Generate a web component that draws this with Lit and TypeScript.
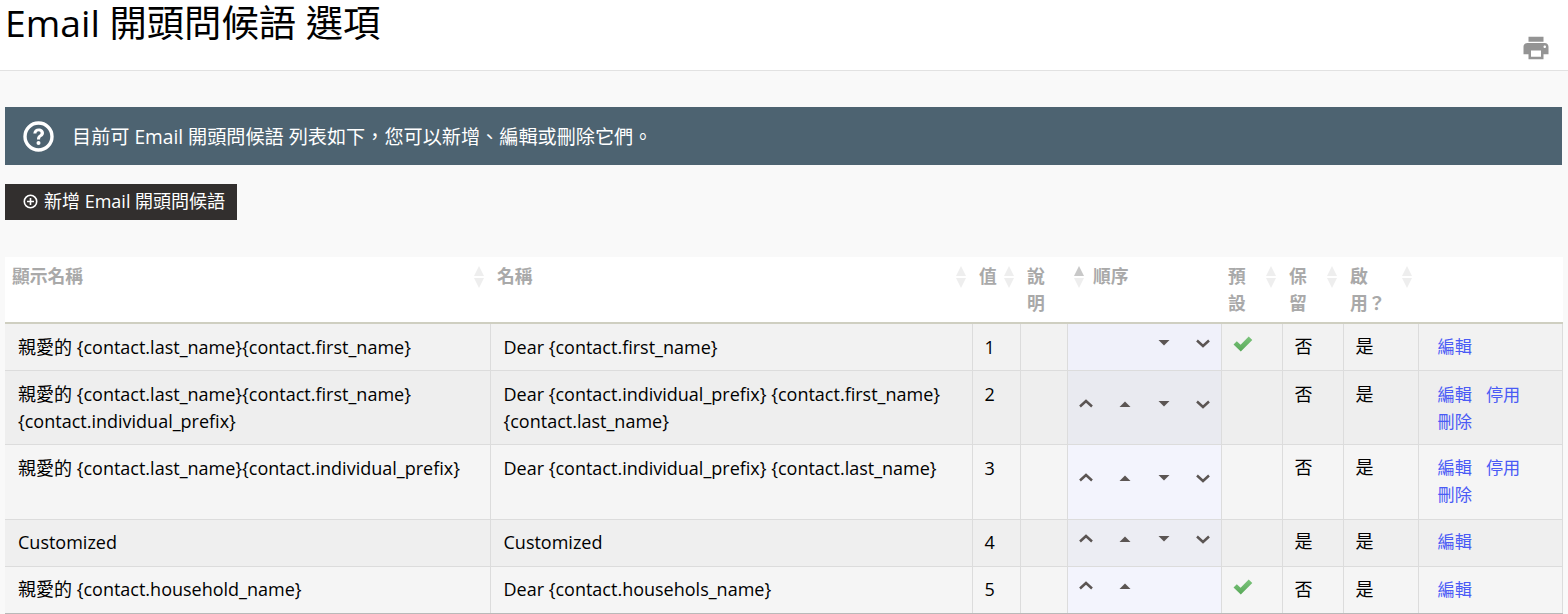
import { LitElement, html, css, svg, nothing } from "lit";
import { customElement } from "lit/decorators.js";

type Row = {
  label: string[];
  name: string[];
  value: string;
  order: [boolean, boolean, boolean, boolean];
  isDefault: boolean;
  reserved: string;
  actions: string[][];
};

const rows: Row[] = [
  { label: ["親愛的 {contact.last_name}{contact.first_name}"], name: ["Dear {contact.first_name}"], value: "1", order: [false, false, true, true], isDefault: true, reserved: "否", actions: [["編輯"]] },
  { label: ["親愛的 {contact.last_name}{contact.first_name}", "{contact.individual_prefix}"], name: ["Dear {contact.individual_prefix} {contact.first_name}", "{contact.last_name}"], value: "2", order: [true, true, true, true], isDefault: false, reserved: "否", actions: [["編輯", "停用"], ["刪除"]] },
  { label: ["親愛的 {contact.last_name}{contact.individual_prefix}"], name: ["Dear {contact.individual_prefix} {contact.last_name}"], value: "3", order: [true, true, true, true], isDefault: false, reserved: "否", actions: [["編輯", "停用"], ["刪除"]] },
  { label: ["Customized"], name: ["Customized"], value: "4", order: [true, true, true, true], isDefault: false, reserved: "是", actions: [["編輯"]] },
  { label: ["親愛的 {contact.household_name}"], name: ["Dear {contact.househols_name}"], value: "5", order: [true, true, false, false], isDefault: true, reserved: "否", actions: [["編輯"]] },
];

const orderIcons = [
  svg`<path d="M1 8.500 7 3l6 5.500" fill="none" stroke="currentColor" stroke-width="2.500"/>`,
  svg`<path d="M1.500 9 7 3.500 12.500 9z" fill="currentColor"/>`,
  svg`<path d="M1.500 3h11L7 8.500z" fill="currentColor"/>`,
  svg`<path d="M1 3.500 7 9l6-5.500" fill="none" stroke="currentColor" stroke-width="2.500"/>`,
];

@customElement("app-root")
export class AppRoot extends LitElement {
  static styles = css`
    :host {
      display: block;
      height: 614px;
      overflow: hidden;
      background: #f9f9f9;
      color: #000;
      font-family: "Open Sans", "Noto Sans CJK TC", sans-serif;
      font-size: 18px;
      line-height: 27px;
    }
    .page-header {
      box-sizing: border-box;
      background: #fff;
      border-bottom: 1px solid #e2e2e2;
      display: flex;
      justify-content: space-between;
      padding: 0 17px 0 5px;
      height: 71px;
    }
    h1 {
      margin: 0;
      font-size: 37.3px;
      font-weight: 400;
      line-height: 46px;
      white-space: pre;
    }
    .print {
      width: 30px;
      height: 30px;
      margin-top: 33px;
      color: #949494;
      fill: currentColor;
    }
    .content {
      padding: 36px 6px 0 5px;
    }
    .info {
      height: 58px;
      background: #4d6371;
      color: #fff;
      display: flex;
      align-items: center;
      gap: 18px;
      padding-left: 18px;
      font-size: 19.15px;
    }
    .info span {
      margin-top: 2px;
    }
    .info svg {
      width: 31px;
      height: 31px;
      flex: none;
    }
    .add {
      display: inline-flex;
      align-items: center;
      gap: 6px;
      height: 36px;
      margin-top: 19px;
      padding: 0 12px 1px 18px;
      box-sizing: border-box;
      background: #322f2e;
      vertical-align: top;
    }
    a.add { color: #fff; }
    .add svg {
      width: 15px;
      height: 15px;
    }
    .actions-row {
      height: 92px;
    }
    table {
      width: 1557px;
      table-layout: fixed;
      border-collapse: collapse;
      background: #fff;
    }
    th {
      height: 66px;
      box-sizing: border-box;
      padding: 6px 6px 0 7px;
      text-align: left;
      vertical-align: top;
      font-size: 17.8px;
      font-weight: 700;
      color: #a9a9a9;
      border-bottom: 2px solid #cfcfc1;
    }
    .th {
      display: flex;
      justify-content: space-between;
      gap: 4px;
    }
    .th.lead {
      justify-content: flex-start;
      gap: 9px;
    }
    .sort {
      flex: none;
      width: 10px;
      height: 22px;
      margin-top: 3px;
    }
    .sort path { fill: #eeeeee; }
    .sort path.on { fill: #c8c8c8; }
    td {
      box-sizing: border-box;
      padding: 10px 7px 9px 13px;
      vertical-align: top;
      border: 1px solid #dcdcdc;
      white-space: nowrap;
    }
    td:first-child { border-left: 0; }
    tr:last-child td { border-bottom-color: #b9b9b9; }
    tr.s0 td { background: #f2f2f2; }
    tr.s0 td.o { background: #f0f1fa; }
    tr.s1 td { background: #eeeeee; }
    tr.s1 td.o { background: #e9eaf0; }
    tr.s2 td, tr.s4 td { background: #f5f5f5; }
    tr.s2 td.o, tr.s4 td.o { background: #f3f4fd; }
    tr.s3 td { background: #efefef; }
    tr.s3 td.o { background: #ecedf3; }
    tr.s3 td, tr.s4 td {
      padding-top: 9px;
      padding-bottom: 10px;
    }
    td.c { padding-left: 12px; }
    td.o, tr.s3 td.o, tr.s4 td.o {
      padding: 0 0 8px 11px;
      vertical-align: middle;
    }
    .order {
      display: flex;
      gap: 25px;
      color: #5b5553;
    }
    .order svg {
      width: 14px;
      height: 12px;
      flex: none;
    }
    td.d, tr.s3 td.d, tr.s4 td.d { padding: 0 0 0 11px; }
    .check {
      display: block;
      width: 20px;
      height: 18px;
      margin-top: 11px;
    }
    td.a {
      padding-left: 19px;
      font-size: 17.2px;
    }
    td.cjk { padding-top: 9px; padding-bottom: 10px; }
    tr.s1 td.cjk { padding-top: 10px; padding-bottom: 9px; }
    tr.s2 td.cjk { padding-bottom: 11px; }
    tr.s3 td.cjk { padding-top: 8px; }
    .links {
      display: flex;
      gap: 14px;
    }
    a {
      color: #4a5bf5;
      text-decoration: none;
    }
  `;

  private sort(active = false) {
    return html`<svg class="sort" viewBox="0 0 10 22" aria-hidden="true">
      <path class=${active ? "on" : ""} d="M5 0l5 10H0z" />
      <path d="M0 12h10L5 22z" />
    </svg>`;
  }

  private header(label: unknown, leading = false) {
    return leading
      ? html`<th><div class="th lead">${this.sort(true)}<span>${label}</span></div></th>`
      : html`<th><div class="th"><span>${label}</span>${this.sort()}</div></th>`;
  }

  private lines(list: string[]) {
    return list.map((l, i) => html`${i ? html`<br />` : nothing}${l}`);
  }

  render() {
    return html`
      <header class="page-header">
        <h1>Email 開頭問候語 選項</h1>
        <svg class="print" viewBox="0 0 24 24" aria-label="列印">
          <path d="M19 8H5c-1.660 0-3 1.340-3 3v6h4v4h12v-4h4v-6c0-1.660-1.340-3-3-3zm-3 11H8v-5h8v5zm3-7c-.55 0-1-.45-1-1s.45-1 1-1 1 .45 1 1-.45 1-1 1zm-1-9H6v4h12V3z" />
        </svg>
      </header>
      <main class="content">
        <div class="info">
          <svg viewBox="0 0 31 31" aria-hidden="true">
            <circle cx="15.500" cy="15.500" r="13.500" fill="none" stroke="#fff" stroke-width="3.400" />
            <path d="M10.300 12.500c.2-3.200 2.400-5.100 5.400-5.100 3.100 0 5.300 1.900 5.300 4.500 0 1.900-1.100 3-2.400 3.900-1.200.8-1.500 1.300-1.500 2.600h-3.100c0-2.200.7-3.300 2.100-4.300 1-.7 1.500-1.200 1.500-2.100 0-1-.8-1.700-1.900-1.700-1.300 0-2.100.8-2.300 2.200z" fill="#fff" />
            <circle cx="15.500" cy="22" r="2" fill="#fff" />
          </svg>
          <span>目前可 Email 開頭問候語 列表如下，您可以新增、編輯或刪除它們。</span>
        </div>
        <div class="actions-row">
          <a class="add" href="#">
            <svg viewBox="0 0 15 15" aria-hidden="true">
              <circle cx="7.500" cy="7.500" r="6.200" fill="none" stroke="#fff" stroke-width="1.600" />
              <path d="M7.500 4v7M4 7.500h7" stroke="#fff" stroke-width="1.600" />
            </svg>
            <span>新增 Email 開頭問候語</span>
          </a>
        </div>
        <table>
          <colgroup>
            <col style="width:485px" /><col style="width:482px" /><col style="width:48px" />
            <col style="width:47px" /><col style="width:154px" /><col style="width:61px" />
            <col style="width:61px" /><col style="width:75px" /><col style="width:144px" />
          </colgroup>
          <thead>
            <tr>
              ${this.header("顯示名稱")}
              ${this.header("名稱")}
              ${this.header("值")}
              <th><span>說<br />明</span></th>
              ${this.header("順序", true)}
              ${this.header(html`預<br />設`)}
              ${this.header(html`保<br />留`)}
              ${this.header(html`啟<br />用？`)}
              <th></th>
            </tr>
          </thead>
          <tbody>
            ${rows.map(
              (r, i) => html`<tr class="s${i}">
                <td>${this.lines(r.label)}</td>
                <td>${this.lines(r.name)}</td>
                <td class="c">${r.value}</td>
                <td></td>
                <td class="o">
                  <div class="order">
                    ${r.order.map(
                      (on, k) => html`<svg viewBox="0 0 14 12" aria-hidden="true">${on ? orderIcons[k] : nothing}</svg>`
                    )}
                  </div>
                </td>
                <td class="d">
                  ${r.isDefault
                    ? html`<svg class="check" viewBox="0 0 20 18" aria-label="預設">
                        <defs>
                          <linearGradient id="chk${i}" x1="0" y1="0" x2="0" y2="1">
                            <stop offset="0" stop-color="#7cc47c" />
                            <stop offset="1" stop-color="#58a858" />
                          </linearGradient>
                        </defs>
                        <path fill="url(#chk${i})" d="M.5 9.500 3.800 6.300 7.600 9.800 15.700 1.500 19.300 5 7.800 16.500z" />
                      </svg>`
                    : nothing}
                </td>
                <td class="c cjk">${r.reserved}</td>
                <td class="c cjk">是</td>
                <td class="a cjk">
                  ${r.actions.map(
                    (line) => html`<div class="links">${line.map((t) => html`<a href="#">${t}</a>`)}</div>`
                  )}
                </td>
              </tr>`
            )}
          </tbody>
        </table>
      </main>
    `;
  }
}
